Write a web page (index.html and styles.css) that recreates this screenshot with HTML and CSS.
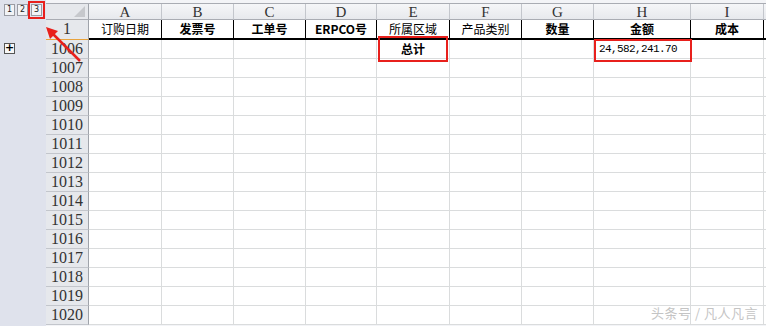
FILE: index.html
```html
<!DOCTYPE html>
<html>
<head>
<meta charset="utf-8">
<link rel="stylesheet" href="styles.css">
</head>
<body>
<div class="app">
  <div class="outline">
    <div class="levels">
      <span class="lvl">1</span>
      <span class="lvl">2</span>
      <span class="lvl lvl3">3</span>
    </div>
    <div class="plus-row"><span class="plus">+</span></div>
  </div>
  <div class="sheet">
    <div class="row colhead">
      <div class="c rh corner"><span class="tri"></span></div>
      <div class="c ca">A</div><div class="c cb">B</div><div class="c cc">C</div>
      <div class="c cd">D</div><div class="c ce">E</div><div class="c cf">F</div>
      <div class="c cg">G</div><div class="c chh">H</div><div class="c ci">I</div>
      <div class="c rest"></div>
    </div>
    <div class="row r1">
      <div class="c rh">1</div>
      <div class="c ca">订购日期</div>
      <div class="c cb b">发票号</div>
      <div class="c cc b">工单号</div>
      <div class="c cd b">ERPCO号</div>
      <div class="c ce">所属区域</div>
      <div class="c cf">产品类别</div>
      <div class="c cg b">数量</div>
      <div class="c chh b">金额</div>
      <div class="c ci b">成本</div>
      <div class="c rest"></div>
    </div>
    <div class="row data">
      <div class="c rh">1006</div>
      <div class="c ca"></div><div class="c cb"></div><div class="c cc"></div><div class="c cd"></div>
      <div class="c ce b total">总计<span class="mark mark-e"></span></div>
      <div class="c cf"></div><div class="c cg"></div>
      <div class="c chh num">24,582,241.70<span class="mark mark-h"></span></div>
      <div class="c ci"></div><div class="c rest"></div>
    </div>
    <div class="row data"><div class="c rh">1007</div><div class="c ca"></div><div class="c cb"></div><div class="c cc"></div><div class="c cd"></div><div class="c ce"></div><div class="c cf"></div><div class="c cg"></div><div class="c chh"></div><div class="c ci"></div><div class="c rest"></div></div>
    <div class="row data"><div class="c rh">1008</div><div class="c ca"></div><div class="c cb"></div><div class="c cc"></div><div class="c cd"></div><div class="c ce"></div><div class="c cf"></div><div class="c cg"></div><div class="c chh"></div><div class="c ci"></div><div class="c rest"></div></div>
    <div class="row data"><div class="c rh">1009</div><div class="c ca"></div><div class="c cb"></div><div class="c cc"></div><div class="c cd"></div><div class="c ce"></div><div class="c cf"></div><div class="c cg"></div><div class="c chh"></div><div class="c ci"></div><div class="c rest"></div></div>
    <div class="row data"><div class="c rh">1010</div><div class="c ca"></div><div class="c cb"></div><div class="c cc"></div><div class="c cd"></div><div class="c ce"></div><div class="c cf"></div><div class="c cg"></div><div class="c chh"></div><div class="c ci"></div><div class="c rest"></div></div>
    <div class="row data"><div class="c rh">1011</div><div class="c ca"></div><div class="c cb"></div><div class="c cc"></div><div class="c cd"></div><div class="c ce"></div><div class="c cf"></div><div class="c cg"></div><div class="c chh"></div><div class="c ci"></div><div class="c rest"></div></div>
    <div class="row data"><div class="c rh">1012</div><div class="c ca"></div><div class="c cb"></div><div class="c cc"></div><div class="c cd"></div><div class="c ce"></div><div class="c cf"></div><div class="c cg"></div><div class="c chh"></div><div class="c ci"></div><div class="c rest"></div></div>
    <div class="row data"><div class="c rh">1013</div><div class="c ca"></div><div class="c cb"></div><div class="c cc"></div><div class="c cd"></div><div class="c ce"></div><div class="c cf"></div><div class="c cg"></div><div class="c chh"></div><div class="c ci"></div><div class="c rest"></div></div>
    <div class="row data"><div class="c rh">1014</div><div class="c ca"></div><div class="c cb"></div><div class="c cc"></div><div class="c cd"></div><div class="c ce"></div><div class="c cf"></div><div class="c cg"></div><div class="c chh"></div><div class="c ci"></div><div class="c rest"></div></div>
    <div class="row data"><div class="c rh">1015</div><div class="c ca"></div><div class="c cb"></div><div class="c cc"></div><div class="c cd"></div><div class="c ce"></div><div class="c cf"></div><div class="c cg"></div><div class="c chh"></div><div class="c ci"></div><div class="c rest"></div></div>
    <div class="row data"><div class="c rh">1016</div><div class="c ca"></div><div class="c cb"></div><div class="c cc"></div><div class="c cd"></div><div class="c ce"></div><div class="c cf"></div><div class="c cg"></div><div class="c chh"></div><div class="c ci"></div><div class="c rest"></div></div>
    <div class="row data"><div class="c rh">1017</div><div class="c ca"></div><div class="c cb"></div><div class="c cc"></div><div class="c cd"></div><div class="c ce"></div><div class="c cf"></div><div class="c cg"></div><div class="c chh"></div><div class="c ci"></div><div class="c rest"></div></div>
    <div class="row data"><div class="c rh">1018</div><div class="c ca"></div><div class="c cb"></div><div class="c cc"></div><div class="c cd"></div><div class="c ce"></div><div class="c cf"></div><div class="c cg"></div><div class="c chh"></div><div class="c ci"></div><div class="c rest"></div></div>
    <div class="row data"><div class="c rh">1019</div><div class="c ca"></div><div class="c cb"></div><div class="c cc"></div><div class="c cd"></div><div class="c ce"></div><div class="c cf"></div><div class="c cg"></div><div class="c chh"></div><div class="c ci"></div><div class="c rest"></div></div>
    <div class="row data"><div class="c rh">1020</div><div class="c ca"></div><div class="c cb"></div><div class="c cc"></div><div class="c cd"></div><div class="c ce"></div><div class="c cf"></div><div class="c cg"></div><div class="c chh"></div><div class="c ci"></div><div class="c rest"></div></div>
  </div>
</div>
<svg class="arrow" width="766" height="326" viewBox="0 0 766 326">
  <line x1="80" y1="61" x2="53" y2="34" stroke="#e8201c" stroke-width="2.5"/>
  <polygon points="46,27 58,31 50,39" fill="#e8201c"/>
</svg>
<div class="watermark">头条号 / 凡人凡言</div>
</body>
</html>
```
FILE: styles.css
```css
* { box-sizing: border-box; }
html, body { margin: 0; padding: 0; }
body {
  width: 766px; height: 326px; overflow: hidden; position: relative;
  background: #dfe2ec;
  font-family: "Liberation Serif", serif;
}
.app { display: flex; height: 326px; }
.outline { width: 46px; flex: none; background: #dfe2ec; }
.levels { height: 20px; display: flex; align-items: center; padding-left: 4px; gap: 2px; }
.lvl {
  width: 11px; height: 12px; border: 1px solid #9a9ca4; background: #f2f3f6;
  font-family: "DejaVu Sans", sans-serif; font-size: 8px; line-height: 10px;
  text-align: center; color: #222;
}
.lvl3 { margin-left: 1px; outline: 2px solid #e8201c; outline-offset: 1px; }
.plus-row { padding: 23px 0 0 4px; }
.plus {
  display: block; width: 11px; height: 11px; border: 1px solid #555; background: #f7f7f7;
  font-family: "DejaVu Sans", sans-serif; font-weight: bold; font-size: 11px;
  line-height: 8px; text-align: center; color: #000;
}
.sheet { flex: 1; padding-top: 3px; background: #f3f4f7; }
.row { display: flex; }
.c {
  flex: none; height: 100%; border-right: 1px solid #dadcdd; border-bottom: 1px solid #dadcdd;
  background: #fff; position: relative; white-space: nowrap;
}
.rh { width: 43px; background: #e6e8ec; border-right: 1px solid #9fa3aa; border-bottom: 1px solid #c3c6cc;
  text-align: center; font-size: 16px; color: #333; }
.ca { width: 73px; } .cb { width: 72px; } .cc { width: 72px; } .cd { width: 71px; }
.ce { width: 73px; } .cf { width: 72px; } .cg { width: 72px; } .chh { width: 97px; }
.ci { width: 73px; } .rest { width: 30px; }

.colhead { height: 17px; border-top: 1px solid #a9acb3; }
.colhead .c {
  background: linear-gradient(#f5f6f8, #e7e9ed); border-right: 1px solid #c3c6cc; border-bottom: 1px solid #a9acb3;
  text-align: center; font-size: 15px; line-height: 16px; color: #333;
}
.colhead .corner { background: #e6e8ec; border-right: 1px solid #9fa3aa; }
.tri {
  position: absolute; right: 3px; bottom: 2px; width: 0; height: 0;
  border-left: 11px solid transparent; border-bottom: 11px solid #c6c8cc;
}
.r1 { height: 20px; }
.r1 .c {
  border-right: 1px solid #000; border-bottom: 2px solid #000;
  font-family: "Noto Sans CJK SC", sans-serif; font-size: 12px; line-height: 18px;
  text-align: center; color: #000;
}
.r1 .rh { font-family: "Liberation Serif", serif; font-size: 16px; line-height: 18px;
  border-right: 1px solid #9fa3aa; border-bottom: 1px solid #e8a33d; color: #333; }
.r1 .rest { border-right: none; }
.b { font-weight: bold; }
.data { height: 19px; }
.data .rh { line-height: 18px; }
.data .c { line-height: 18px; }
.total { text-align: center; font-family: "Noto Sans CJK SC", sans-serif; font-size: 12px; font-weight: bold; }
.num { font-family: "Liberation Mono", monospace; font-size: 11px; letter-spacing: -0.6px; padding-left: 5px; color: #000; }
.mark { position: absolute; z-index: 5; border: 2px solid #e8201c; pointer-events: none; }
.mark-e { left: 1px; top: -4px; width: 70px; height: 26px; }
.mark-h { left: 0; top: -1px; width: 98px; height: 23px; }
.arrow { position: absolute; left: 0; top: 0; pointer-events: none; z-index: 6; }
.watermark {
  position: absolute; right: 8px; bottom: 4px; z-index: 6;
  font-family: "Noto Sans CJK SC", sans-serif; font-size: 13px; color: #c4c4c4; letter-spacing: 0.5px;
}
```
